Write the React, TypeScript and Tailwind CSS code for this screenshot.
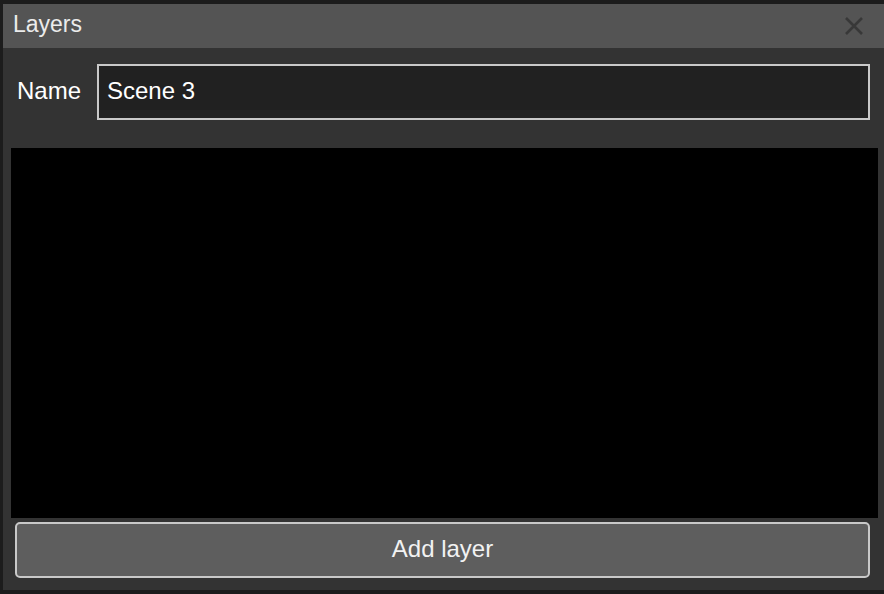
export default function App() {
  return (
    <div
      className="w-[884px] h-[594px] bg-[#1c1c1c] pl-[3px] pt-[4px] pb-[4px] overflow-hidden"
      style={{ fontFamily: '"Liberation Sans", Arial, sans-serif' }}
    >
      <div className="h-full flex flex-col bg-[#333333]">
        <div className="h-[44px] shrink-0 bg-[#545454] flex items-center justify-between pl-[10px] pr-[20px]">
          <span className="text-[23px] text-[#ebebeb] mb-[3px]">Layers</span>
          <svg width="20" height="20" viewBox="0 0 20 20" className="text-[#383838]">
            <path d="M2 2 L18 18 M18 2 L2 18" stroke="currentColor" strokeWidth="2.6" fill="none" />
          </svg>
        </div>
        <div className="flex items-center pt-[16px] pl-[14px] pr-[14px]">
          <span className="w-[80px] text-[24px] text-white mb-[3px]">Name</span>
          <div className="flex-1 h-[56px] bg-[#212121] border-2 border-[#c9c9c9] flex items-center px-[8px]">
            <span className="text-[24px] text-white mb-[3px]">Scene 3</span>
          </div>
        </div>
        <div className="mt-[28px] ml-[8px] mr-[6px] h-[370px] bg-black" />
        <div className="px-[12px] pt-[4px] pr-[14px]">
          <button className="w-full h-[56px] bg-[#5e5e5e] border-2 border-[#c9c9c9] rounded-[5px] text-[24px] text-[#f2f2f2] pb-[2px]">
            Add layer
          </button>
        </div>
      </div>
    </div>
  );
}
